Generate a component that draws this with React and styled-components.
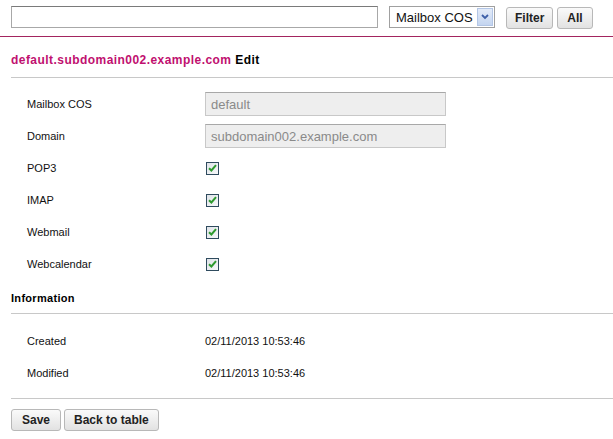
import React from "react";
import styled, { createGlobalStyle } from "styled-components";

const Global = createGlobalStyle`
  html, body { margin: 0; padding: 0; background: #fff; }
  body { font-family: "Liberation Sans", Arial, sans-serif; color: #000; }
`;

const Page = styled.div`
  width: 613px;
  height: 439px;
  overflow: hidden;
`;

const Toolbar = styled.div`
  display: flex;
  align-items: flex-start;
  height: 37px;
  padding: 6px 11px 0;
  border-bottom: 1px solid #a3245f;
  box-sizing: border-box;
`;

const Search = styled.input`
  width: 367px;
  height: 22px;
  box-sizing: border-box;
  border: 1px solid #a8a8a8;
  border-top-color: #7a7a7a;
  margin: 0 11px 0 0;
  padding: 0 3px;
  font: 13px "Liberation Sans", Arial, sans-serif;
`;

const Select = styled.div`
  width: 106px;
  height: 22px;
  box-sizing: border-box;
  border: 1px solid #a0a0a0;
  display: flex;
  align-items: center;
  justify-content: space-between;
  padding: 0 1px 0 6px;
  font-size: 13px;
  white-space: nowrap;
  color: #111;
  margin-right: 11px;
`;

const Arrow = styled.span`
  width: 16px;
  height: 18px;
  box-sizing: border-box;
  border: 1px solid #b3c6e6;
  background: linear-gradient(#e3ebf8, #c4d5f0);
  display: flex;
  align-items: center;
  justify-content: center;
`;

const Button = styled.button`
  height: 22px;
  box-sizing: border-box;
  padding: 0 ${(p) => p.$pad || 10}px;
  margin: ${(p) => p.$mt || 0}px ${(p) => p.$mr || 4}px 0 0;
  border: 1px solid #b8b8b8;
  border-radius: 3px;
  background: linear-gradient(#fafafa, #e2e2e2);
  font: bold 12px "Liberation Sans", Arial, sans-serif;
  color: #222;
  cursor: pointer;
`;

const Content = styled.div`
  padding: 0 0 0 11px;
`;

const Title = styled.h1`
  margin: 0;
  height: 41px;
  line-height: 46px;
  font-size: 12px;
  font-weight: bold;
  border-bottom: 1px solid #c8c8c8;
  box-sizing: border-box;
  letter-spacing: 0.45px;
`;

const Host = styled.span`
  color: #c0106f;
`;

const Fields = styled.div`
  padding: 10px 0 0 16px;
`;

const Row = styled.div`
  display: flex;
  align-items: center;
  height: 32px;
`;

const Label = styled.div`
  width: 178px;
  font-size: 11px;
  color: #111;
`;

const Field = styled.input`
  width: 241px;
  height: 24px;
  box-sizing: border-box;
  border: 1px solid #c8c8c8;
  border-top-color: #a8a8a8;
  background: #eeeeee;
  color: #8a8a8a;
  padding: 0 5px;
  font: 13px "Liberation Sans", Arial, sans-serif;
`;

const Check = styled.span`
  width: 13px;
  height: 13px;
  box-sizing: border-box;
  border: 1px solid #2f4b5e;
  background: linear-gradient(135deg, #dfe3e8, #f7f8f9);
  display: flex;
  align-items: center;
  justify-content: center;
  margin-left: 1px;
`;

const Section = styled.h2`
  margin: 0;
  font-size: 11px;
  font-weight: bold;
  height: 34px;
  padding-top: 8px;
  line-height: 20px;
  border-bottom: 1px solid #c8c8c8;
  box-sizing: border-box;
  letter-spacing: 0.3px;
`;

const Info = styled.div`
  padding: 11px 0 9px 16px;
  border-bottom: 1px solid #c8c8c8;
`;

const Value = styled.div`
  font-size: 11px;
  color: #111;
`;

const Actions = styled.div`
  display: flex;
  padding-top: 10px;
`;

const CheckMark = () => (
  <svg width="9" height="8" viewBox="0 0 9 8">
    <path d="M1 4.2 L3.4 6.5 L8 1.2" fill="none" stroke="#2e9a2e" strokeWidth="2" />
  </svg>
);

const fields = [
  ["Mailbox COS", "default"],
  ["Domain", "subdomain002.example.com"],
];
const checks = ["POP3", "IMAP", "Webmail", "Webcalendar"];
const info = [
  ["Created", "02/11/2013 10:53:46"],
  ["Modified", "02/11/2013 10:53:46"],
];

export default function App() {
  return (
    <Page>
      <Global />
      <Toolbar>
        <Search />
        <Select>
          Mailbox COS
          <Arrow>
            <svg width="8" height="6" viewBox="0 0 8 6">
              <path d="M1 1 L4 4 L7 1" fill="none" stroke="#3d5fa8" strokeWidth="1.8" />
            </svg>
          </Arrow>
        </Select>
        <Button $pad={8} $mt={1}>Filter</Button>
        <Button $pad={9} $mt={1}>All</Button>
      </Toolbar>
      <Content>
        <Title>
          <Host>default.subdomain002.example.com</Host> Edit
        </Title>
        <Fields>
          {fields.map(([l, v]) => (
            <Row key={l}>
              <Label>{l}</Label>
              <Field value={v} readOnly />
            </Row>
          ))}
          {checks.map((l) => (
            <Row key={l}>
              <Label>{l}</Label>
              <Check>
                <CheckMark />
              </Check>
            </Row>
          ))}
        </Fields>
        <Section>Information</Section>
        <Info>
          {info.map(([l, v]) => (
            <Row key={l}>
              <Label>{l}</Label>
              <Value>{v}</Value>
            </Row>
          ))}
        </Info>
        <Actions>
          <Button $pad={10} $mr={3}>Save</Button>
          <Button $pad={9}>Back to table</Button>
        </Actions>
      </Content>
    </Page>
  );
}
